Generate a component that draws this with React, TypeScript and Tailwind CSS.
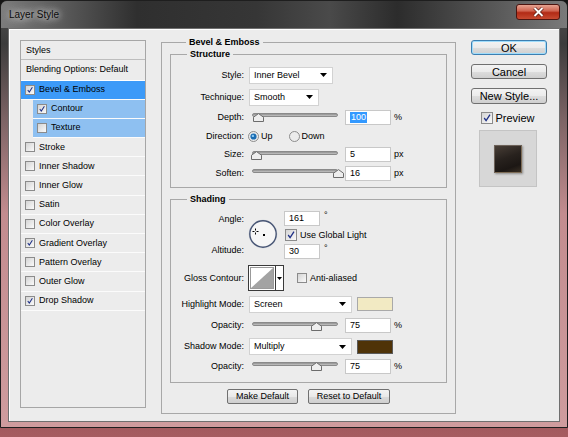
import type { ReactNode } from 'react';

type StyleItem = { label: string; checked: boolean; sub?: boolean; active?: 'main' | 'sub' };

const styleItems: StyleItem[] = [
  { label: 'Bevel & Emboss', checked: true, active: 'main' },
  { label: 'Contour', checked: true, sub: true, active: 'sub' },
  { label: 'Texture', checked: false, sub: true, active: 'sub' },
  { label: 'Stroke', checked: false },
  { label: 'Inner Shadow', checked: false },
  { label: 'Inner Glow', checked: false },
  { label: 'Satin', checked: false },
  { label: 'Color Overlay', checked: false },
  { label: 'Gradient Overlay', checked: true },
  { label: 'Pattern Overlay', checked: false },
  { label: 'Outer Glow', checked: false },
  { label: 'Drop Shadow', checked: true },
];

// Track runs 86px starting 3px into the slider box
const TRACK = 86;

function Check({ checked, big = false }: { checked: boolean; big?: boolean }) {
  return (
    <span
      className={`flex shrink-0 items-center justify-center border border-[#8b8b8b] bg-[linear-gradient(135deg,#d4d4d4,#fafafa)] ${
        big ? 'h-[12px] w-[12px]' : 'h-[10px] w-[10px]'
      }`}
    >
      {checked && (
        <svg viewBox="0 0 10 10" className="h-full w-full">
          <path d="M2.2 5 L4.1 7.6 L8 1.6" fill="none" stroke="#1d2f86" strokeWidth="1.3" />
        </svg>
      )}
    </span>
  );
}

function Radio({ on }: { on: boolean }) {
  return (
    <svg width="11" height="11" viewBox="0 0 11 11" className="shrink-0">
      <circle cx="5.5" cy="5.5" r="5" fill="#ececec" stroke="#8c8c8c" />
      {on && <circle cx="5.5" cy="5.5" r="3.1" fill="#1b6db3" />}
      {on && <circle cx="4.9" cy="4.9" r="1.2" fill="#86c6f2" />}
    </svg>
  );
}

function Arrow() {
  return (
    <svg width="7" height="4" viewBox="0 0 7 4" className="shrink-0">
      <path d="M0 0 H7 L3.5 4 Z" fill="#000" />
    </svg>
  );
}

function Select({ value, className }: { value: string; className: string }) {
  return (
    <div className={`flex h-[17px] shrink-0 items-center justify-between border border-[#d2d2d2] bg-white pl-[4px] pr-[5px] ${className}`}>
      <span>{value}</span>
      <Arrow />
    </div>
  );
}

function Field({ children, className }: { children: ReactNode; className: string }) {
  return (
    <div className={`flex h-[15px] shrink-0 items-center border border-[#c8c8c8] bg-white pl-[4px] ${className}`}>
      {children}
    </div>
  );
}

function Slider({ pos }: { pos: number }) {
  return (
    <div className="relative h-[12px] w-[96px] shrink-0">
      <div className="ml-[3px] mt-[2px] h-[4px] w-[86px] rounded-full border border-[#8a8a8a] bg-[linear-gradient(#8f8f8f,#c4c4c4)]" />
      <svg
        className="absolute top-[2px]"
        style={{ left: 3 + pos * TRACK - 5.5 }}
        width="11"
        height="9"
        viewBox="0 0 11 9"
      >
        <path d="M0.5 8.5 V4.2 L5.5 0.6 L10.5 4.2 V8.5 Z" fill="#eeeeee" stroke="#6c6c6c" />
      </svg>
    </div>
  );
}

function Label({ children }: { children: ReactNode }) {
  return <span className="w-[73px] shrink-0 text-right">{children}</span>;
}

function SliderRow({ label, pos, value, unit, height }: { label: string; pos: number; value: ReactNode; unit: string; height: string }) {
  return (
    <div className={`flex items-center gap-[5px] ${height}`}>
      <Label>{label}</Label>
      <div className="flex items-center">
        <Slider pos={pos} />
        <Field className="w-[46px]">{value}</Field>
        <span className="ml-[3px]">{unit}</span>
      </div>
    </div>
  );
}

function TitleBar() {
  return (
    <div className="flex h-[27px] items-start justify-between rounded-t-[6px] bg-[linear-gradient(90deg,#7c7c7c_0%,#5d5d5d_10%,#2f2f2f_24%,#363636_45%,#4a4a4a_58%,#2c2c2c_70%,#5a5a5a_88%,#7a7a7a_100%)]">
      <span className="ml-[8px] mt-[8px] text-[10px] leading-[12px] text-[#0c0c0c] [text-shadow:0_0_6px_#e6e6e6,0_0_10px_#d4d4d4]">
        Layer Style
      </span>
      <div className="mr-[7px] mt-[3px] flex h-[16px] w-[44px] items-center justify-center rounded-[3px] border border-[#4d1510] bg-[linear-gradient(180deg,#e6a391_0%,#d06450_42%,#b22a15_55%,#c74a31_100%)]">
        <svg width="11" height="10" viewBox="0 0 11 10">
          <path d="M1.5 1 L9.5 9 M9.5 1 L1.5 9" stroke="#5a1a12" strokeWidth="3.4" />
          <path d="M1.5 1 L9.5 9 M9.5 1 L1.5 9" stroke="#ffffff" strokeWidth="1.9" />
        </svg>
      </div>
    </div>
  );
}

function StylesList() {
  return (
    <div className="flex h-[368px] w-[126px] shrink-0 flex-col border border-[#a6a6a6]">
      <div className="flex h-[19px] items-center border-b border-[#bdbdbd] pl-[5px]">Styles</div>
      <div className="flex h-[20.5px] items-center border-b border-white pl-[5px]">Blending Options: Default</div>
      {styleItems.map((item) => (
        <div key={item.label} className={`flex h-[19.2px] ${item.sub ? 'pl-[12px]' : ''}`}>
          <div
            className={`flex flex-1 items-center gap-[4px] border-b border-[#fbfbfb] pl-[4px] ${
              item.active === 'main' ? 'bg-[#3c9af8]' : item.active === 'sub' ? 'bg-[#8ec0f1]' : ''
            }`}
          >
            <Check checked={item.checked} />
            <span>{item.label}</span>
          </div>
        </div>
      ))}
    </div>
  );
}

function AngleDial() {
  return (
    <svg width="30" height="30" viewBox="0 0 30 30" className="mt-[8px] shrink-0">
      <circle cx="15" cy="15" r="14" fill="none" stroke="#d8dbe2" strokeWidth="1" />
      <circle cx="15" cy="15" r="13.2" fill="#f6f6f6" stroke="#475574" strokeWidth="1.4" />
      <rect x="15" y="15" width="2" height="2" fill="#000" />
      <path d="M4.5 12.5 H6.5 M8.5 12.5 H10.5 M7.5 9.5 V11.5 M7.5 13.5 V15.5" stroke="#000" strokeWidth="1" />
    </svg>
  );
}

function GlossContour() {
  return (
    <div className="flex h-[26px] w-[36px] shrink-0 border border-[#3a3a3a] bg-white">
      <div className="m-[1px] flex-1 border border-[#9a9a9a]">
        <svg viewBox="0 0 22 20" preserveAspectRatio="none" className="h-full w-full">
          <path d="M0 20 L22 0 L22 20 Z" fill="#a3a3a3" />
        </svg>
      </div>
      <div className="flex w-[8px] items-center justify-center border-l border-[#3a3a3a]">
        <svg width="5" height="3" viewBox="0 0 5 3">
          <path d="M0 0 H5 L2.5 3 Z" fill="#000" />
        </svg>
      </div>
    </div>
  );
}

function BevelPanel() {
  return (
    <fieldset className="w-[295px] border border-[#a8a8a8] px-[8px] pb-[9px] pt-[1px]">
      <legend className="ml-[16px] px-[3px] font-bold">Bevel &amp; Emboss</legend>

      <fieldset className="border border-[#a8a8a8] pb-[4px] pt-[4px]">
        <legend className="ml-[16px] px-[3px] font-bold">Structure</legend>
        <div className="flex h-[22px] items-center gap-[5px]">
          <Label>Style:</Label>
          <Select value="Inner Bevel" className="w-[84px]" />
        </div>
        <div className="flex h-[22px] items-center gap-[5px]">
          <Label>Technique:</Label>
          <Select value="Smooth" className="w-[70px]" />
        </div>
        <SliderRow
          label="Depth:"
          pos={0.07}
          height="h-[18px]"
          unit="%"
          value={<span className="bg-[#3399ff] px-[1px] text-white">100</span>}
        />
        <div className="flex h-[20px] items-center gap-[4px]">
          <Label>Direction:</Label>
          <div className="flex items-center gap-[2px]">
            <Radio on />
            <span>Up</span>
          </div>
          <div className="ml-[12px] flex items-center gap-[2px]">
            <Radio on={false} />
            <span>Down</span>
          </div>
        </div>
        <SliderRow label="Size:" pos={0.05} height="h-[17px]" unit="px" value="5" />
        <SliderRow label="Soften:" pos={1} height="h-[20px]" unit="px" value="16" />
      </fieldset>

      <fieldset className="mt-[6px] border border-[#a8a8a8] pb-[9px] pt-[6px]">
        <legend className="ml-[16px] px-[3px] font-bold">Shading</legend>
        <div className="flex h-[48px]">
          <div className="flex w-[73px] shrink-0 flex-col text-right">
            <span className="mt-[3px]">Angle:</span>
            <span className="mb-[3px] mt-auto">Altitude:</span>
          </div>
          <div className="ml-[4px]">
            <AngleDial />
          </div>
          <div className="ml-[6px] flex flex-col">
            <div className="flex">
              <Field className="h-[14px] w-[36px]">161</Field>
              <span className="ml-[4px] leading-[8px]">°</span>
            </div>
            <div className="mt-[2px] flex h-[16px] items-center gap-[3px] pl-[1px]">
              <Check checked big />
              <span>Use Global Light</span>
            </div>
            <div className="mt-[2px] flex">
              <Field className="h-[14px] w-[36px]">30</Field>
              <span className="ml-[4px] leading-[8px]">°</span>
            </div>
          </div>
        </div>
        <div className="mt-[6px] flex h-[26px] items-center gap-[4px]">
          <Label>Gloss Contour:</Label>
          <GlossContour />
          <div className="ml-[9px] flex items-center gap-[3px]">
            <Check checked={false} />
            <span>Anti-aliased</span>
          </div>
        </div>
        <div className="mt-[4px] flex h-[18px] items-center gap-[5px]">
          <Label>Highlight Mode:</Label>
          <Select value="Screen" className="w-[103px]" />
          <div className="h-[14px] w-[36px] border border-[#a9a9a9] bg-[#f2eac3]" />
        </div>
        <div className="mt-[5px]">
          <SliderRow label="Opacity:" pos={0.75} height="h-[15px]" unit="%" value="75" />
        </div>
        <div className="mt-[5px] flex h-[17px] items-center gap-[5px]">
          <Label>Shadow Mode:</Label>
          <Select value="Multiply" className="w-[103px]" />
          <div className="h-[14px] w-[36px] border border-[#5a5a5a] bg-[#4f3308]" />
        </div>
        <div className="mt-[4px]">
          <SliderRow label="Opacity:" pos={0.75} height="h-[14px]" unit="%" value="75" />
        </div>
      </fieldset>

      <div className="mt-[6px] flex justify-center gap-[10px]">
        <button className="flex h-[15px] w-[71px] items-center justify-center rounded-[2px] border border-[#707070] bg-[linear-gradient(#f3f3f3_0%,#e9e9e9_50%,#dadada_52%,#cfcfcf_100%)]">
          Make Default
        </button>
        <button className="flex h-[15px] w-[82px] items-center justify-center rounded-[2px] border border-[#707070] bg-[linear-gradient(#f3f3f3_0%,#e9e9e9_50%,#dadada_52%,#cfcfcf_100%)]">
          Reset to Default
        </button>
      </div>
    </fieldset>
  );
}

function RightColumn() {
  const btn =
    'flex w-[76px] items-center justify-center rounded-[3px] border text-[11px] leading-[12px] bg-[linear-gradient(#f3f3f3_0%,#ebebeb_50%,#dddddd_52%,#cfcfcf_100%)]';
  return (
    <div className="ml-[15px] flex w-[76px] shrink-0 flex-col">
      <button className={`${btn} h-[15px] border-[#3c7fb1] shadow-[inset_0_0_0_1px_#9fdcfb]`}>OK</button>
      <button className={`${btn} mt-[9px] h-[15px] border-[#707070]`}>Cancel</button>
      <button className={`${btn} mt-[9px] h-[16px] border-[#707070]`}>New Style...</button>
      <div className="mt-[8px] flex h-[12px] items-center justify-center gap-[2px] pr-[2px] text-[11px]">
        <Check checked big />
        <span>Preview</span>
      </div>
      <div className="ml-[8px] mt-[6px] flex h-[57px] w-[58px] items-center justify-center border border-[#c4c4c4] bg-[#d7d7d7]">
        <div className="h-[28px] w-[28px] bg-[linear-gradient(160deg,#4b4139_0%,#28221e_45%,#1c1714_75%,#3c3226_100%)] shadow-[inset_1px_1px_0_#6d6259,inset_-1px_-1px_0_#7d6c56,1px_1px_2px_rgba(0,0,0,0.35)]" />
      </div>
    </div>
  );
}

export default function App() {
  return (
    <div className="h-[437px] w-[568px] overflow-hidden bg-[linear-gradient(180deg,#141414_0%,#3a2a2b_30%,#a65c60_100%)] font-['Liberation_Sans',Arial,sans-serif] text-[9px] leading-[11px] text-black">
      <div className="flex h-[428px] flex-col rounded-t-[7px] border border-[#1e1e1e] bg-[linear-gradient(180deg,#505050_0%,#3c3c3c_10%,#7d6465_28%,#c38c8f_50%,#cf9c9e_100%)]">
        <TitleBar />
        <div className="flex flex-1 px-[7px] pb-[5px]">
          <div className="flex flex-1 border border-[#6f6f6f] bg-[#ececec] pl-[11px] pt-[11px] shadow-[inset_1px_1px_0_#ffffff]">
            <StylesList />
            <div className="ml-[15px] mt-[-3px]">
              <BevelPanel />
            </div>
            <RightColumn />
          </div>
        </div>
      </div>
    </div>
  );
}
